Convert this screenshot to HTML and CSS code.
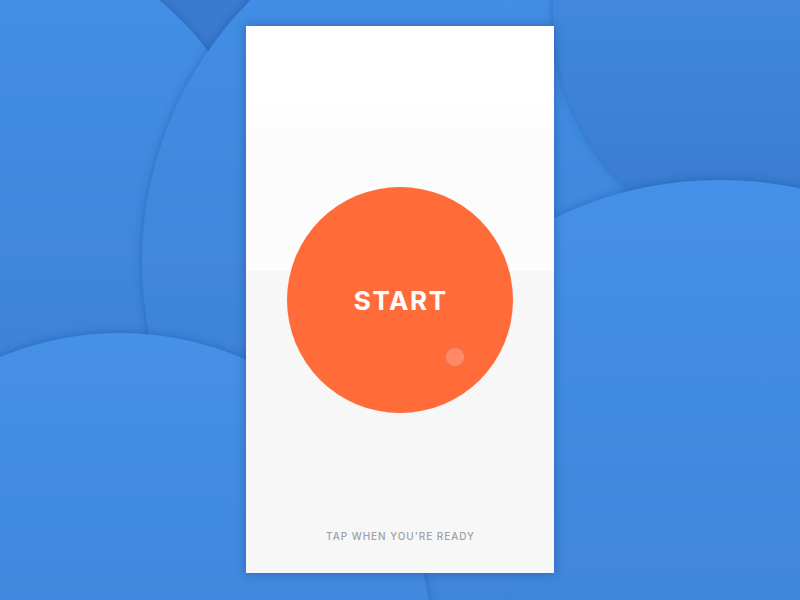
FILE: index.html
```html
<!DOCTYPE html>
<html lang="en">
<head>
<meta charset="utf-8">
<title>Start</title>
<link rel="stylesheet" href="styles.css">
</head>
<body>
<svg class="backdrop" width="800" height="600" viewBox="0 0 800 600" aria-hidden="true">
  <defs>
    <linearGradient id="g" x1="0" y1="0" x2="0" y2="1">
      <stop offset="0" stop-color="#4590e8"/>
      <stop offset="0.5" stop-color="#3f87dd"/>
      <stop offset="1" stop-color="#3779cd"/>
    </linearGradient>
    <filter id="sh" filterUnits="userSpaceOnUse" x="-300" y="-300" width="1400" height="1200">
      <feDropShadow dx="0" dy="0" stdDeviation="5" flood-color="#153f80" flood-opacity="0.4"/>
    </filter>
  </defs>
  <rect width="800" height="600" fill="#3a7bd0"/>
  <circle cx="-50" cy="250" r="326" fill="url(#g)" filter="url(#sh)"/>
  <circle cx="512" cy="262" r="370" fill="url(#g)" filter="url(#sh)"/>
  <circle cx="794" cy="14" r="241" fill="url(#g)" filter="url(#sh)"/>
  <circle cx="720" cy="560" r="380" fill="url(#g)" filter="url(#sh)"/>
  <circle cx="120" cy="645" r="312" fill="url(#g)" filter="url(#sh)"/>
</svg>
<main class="stage">
  <section class="card">
    <button class="start-btn" type="button">
      <span class="start-label">START</span>
      <span class="touch-dot"></span>
    </button>
    <div class="footer">
      <p class="hint">TAP WHEN YOU'RE READY</p>
    </div>
  </section>
</main>
</body>
</html>
```

FILE: styles.css
```css
html, body {
  margin: 0;
  padding: 0;
  width: 800px;
  height: 600px;
  overflow: hidden;
  background: #3a7dd3;
  font-family: Inter, "Noto Sans", "Liberation Sans", sans-serif;
}

.backdrop {
  position: absolute;
  left: 0;
  top: 0;
  z-index: 0;
}

.stage {
  position: relative;
  z-index: 1;
  width: 800px;
  height: 600px;
  display: flex;
  align-items: center;
  justify-content: center;
}

.card {
  width: 308px;
  height: 547px;
  margin-top: -1px;
  display: flex;
  flex-direction: column;
  align-items: center;
  padding-top: 161px;
  box-sizing: border-box;
  background: linear-gradient(to bottom, #ffffff 0, #ffffff 70px, #fcfcfd 120px, #fdfdfe 244px, #f7f7f8 245px, #f7f7f8 100%);
  box-shadow: 0 0 10px rgba(16, 50, 110, 0.4);
}

.start-btn {
  position: relative;
  width: 226px;
  height: 226px;
  border: 0;
  padding: 0;
  border-radius: 50%;
  background: #ff6c3a;
  display: flex;
  align-items: center;
  justify-content: center;
  cursor: pointer;
}

.start-label {
  color: #ffffff;
  font-family: Inter, "Noto Sans", sans-serif;
  font-weight: 700;
  font-size: 26px;
  line-height: 1;
  letter-spacing: 1.6px;
  margin-left: 1.6px;
  margin-top: 1px;
}

.touch-dot {
  position: absolute;
  left: 158px;
  top: 160px;
  width: 20px;
  height: 20px;
  box-sizing: border-box;
  border-radius: 50%;
  background: #ff8a67;
  border: 1px solid rgba(200, 84, 52, 0.4);
}

.footer {
  flex: 1;
  width: 100%;
  display: flex;
  align-items: flex-end;
  justify-content: center;
  padding-bottom: 31px;
  box-sizing: border-box;
}

.hint {
  margin: 0;
  color: #a0a0a4;
  font-family: Inter, "Noto Sans", sans-serif;
  font-weight: 500;
  font-size: 10px;
  line-height: 12px;
  letter-spacing: 0.95px;
  margin-left: 0.95px;
}
```
